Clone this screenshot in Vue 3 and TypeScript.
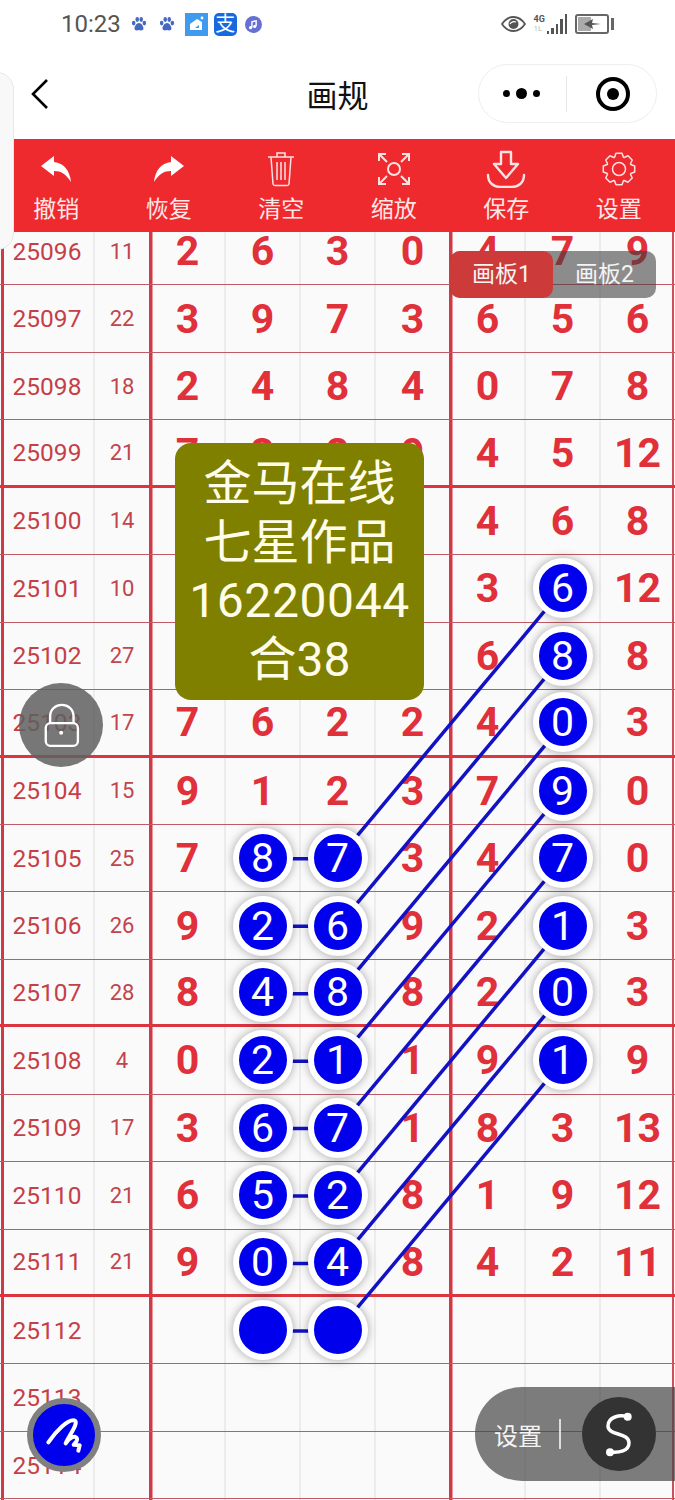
<script setup lang="ts">
const ROW_H = 67.45;
const TOP = 218;
const COL_LEFT = 263;
const COL_MID = 338;
const COL_RIGHT = 563;

// "(8)" is a picked number, "()" a picked blank, "-" an empty cell
const rawRows: [string, string, string][] = [
  ["25096", "11", "2 6 3 0 4 7 9"],
  ["25097", "22", "3 9 7 3 6 5 6"],
  ["25098", "18", "2 4 8 4 0 7 8"],
  ["25099", "21", "7 3 2 9 4 5 12"],
  ["25100", "14", "- - - - 4 6 8"],
  ["25101", "10", "- - - - 3 (6) 12"],
  ["25102", "27", "- - - - 6 (8) 8"],
  ["25103", "17", "7 6 2 2 4 (0) 3"],
  ["25104", "15", "9 1 2 3 7 (9) 0"],
  ["25105", "25", "7 (8) (7) 3 4 (7) 0"],
  ["25106", "26", "9 (2) (6) 9 2 (1) 3"],
  ["25107", "28", "8 (4) (8) 8 2 (0) 3"],
  ["25108", "4", "0 (2) (1) 1 9 (1) 9"],
  ["25109", "17", "3 (6) (7) 1 8 3 13"],
  ["25110", "21", "6 (5) (2) 8 1 9 12"],
  ["25111", "21", "9 (0) (4) 8 4 2 11"],
  ["25112", "", "- () () - - - -"],
  ["25113", "", "- - - - - - -"],
  ["25114", "", "- - - - - - -"],
];

const rows = rawRows.map(([id, sum, cells], i) => ({
  id,
  sum,
  thick: i % 4 === 3 && i < 16,
  cells: cells.split(" ").map((c) => ({
    ball: c.startsWith("("),
    text: c === "-" ? "" : c.replace(/[()]/g, ""),
  })),
}));

const rowY = (i: number) => TOP + ROW_H * (i + 0.5);

// each pick in the middle column joins up to one in the right column, four rows higher
const links = [9, 10, 11, 12, 13, 14, 15, 16].map((i) => ({
  y1: rowY(i),
  y2: rowY(i - 4),
  y: rowY(i),
}));

const tools = [
  { name: "撤销", icon: "undo" },
  { name: "恢复", icon: "redo" },
  { name: "清空", icon: "trash" },
  { name: "缩放", icon: "zoom" },
  { name: "保存", icon: "save" },
  { name: "设置", icon: "gear" },
];

function gearPath() {
  let d = "";
  for (let i = 0; i < 8; i++) {
    const a = (i * Math.PI) / 4;
    const pts: [number, number][] = [
      [12.6, a - 0.36],
      [16, a - 0.19],
      [16, a + 0.19],
      [12.6, a + 0.36],
    ];
    for (const [r, t] of pts) {
      const x = (17 + r * Math.cos(t)).toFixed(2);
      const y = (17 + r * Math.sin(t)).toFixed(2);
      d += (d ? "L" : "M") + x + " " + y;
    }
  }
  return d + "Z";
}
const gear = gearPath();
</script>

<template>
  <div class="page">
    <div class="status">
      <div class="status-left">
        <span class="time">10:23</span>
        <svg v-for="n in 2" :key="n" class="paw" viewBox="0 0 18 18">
          <ellipse cx="3" cy="8" rx="2" ry="2.6" />
          <ellipse cx="7" cy="4" rx="2" ry="2.8" />
          <ellipse cx="11.5" cy="4" rx="2" ry="2.8" />
          <ellipse cx="15" cy="8" rx="2" ry="2.6" />
          <path d="M9 8c-2.5 0-5 3.500-5 6 0 2.500 3 2.500 5 1.800 2 .7 5 .7 5-1.800 0-2.500-2.500-6-5-6z" />
        </svg>
        <svg class="house" viewBox="0 0 23 23">
          <rect width="23" height="23" fill="#3f9bf0" />
          <path d="M5 17v-6l7-5 5 3v8z" fill="#fff" />
          <circle cx="17" cy="5" r="1.400" fill="#fff" />
          <path d="M10 15l4-3v3z" fill="#3f9bf0" />
        </svg>
        <span class="alipay">支</span>
        <svg class="music" viewBox="0 0 16 16">
          <circle cx="8" cy="8" r="8" fill="#6670d2" />
          <path d="M6.500 11V5.500l4-1v5" fill="none" stroke="#fff" stroke-width="1.300" />
          <circle cx="5.200" cy="11" r="1.500" fill="#fff" />
          <circle cx="9.200" cy="9.800" r="1.500" fill="#fff" />
        </svg>
      </div>
      <div class="status-right">
        <svg class="eye" viewBox="0 0 25 16">
          <path d="M1 8c3-4.500 7-7 11.500-7S21 3.500 24 8c-3 4.500-7 7-11.500 7S4 12.500 1 8z" fill="none" stroke="#555" stroke-width="1.800" />
          <circle cx="12.500" cy="8" r="5" fill="#555" />
          <path d="M9 8c1-2 4-3 6-2" stroke="#fff" fill="none" stroke-width="1.200" />
        </svg>
        <div class="net">
          <span class="net-4g">4G</span>
          <span class="net-hd">1L</span>
        </div>
        <div class="bars">
          <i class="b1"></i><i class="b2"></i><i class="b3"></i><i class="b4"></i><i class="b5"></i>
        </div>
        <div class="battery">
          <svg class="flash" viewBox="0 0 28 14">
            <rect x="0" y="0" width="13" height="14" fill="#aaa" />
            <path d="M6 7l9-5-1 4 9 1-9 1 1 4z" fill="#555" />
          </svg>
        </div>
        <i class="battery-nub"></i>
      </div>
    </div>

    <div class="nav">
      <svg class="back" viewBox="0 0 18 32">
        <path d="M16 2L2 16l14 14" fill="none" stroke="#000" stroke-width="2.600" />
      </svg>
      <div class="title">画规</div>
      <div class="capsule">
        <div class="dots">
          <i class="dot"></i><i class="dot big"></i><i class="dot"></i>
        </div>
        <i class="capsule-line"></i>
        <div class="target"><i></i></div>
      </div>
    </div>

    <div class="toolbar">
      <div v-for="t in tools" :key="t.name" class="tool">
        <div class="tool-icon">
          <svg v-if="t.icon === 'undo'" width="32" height="28" viewBox="0 0 32 28">
            <path d="M1 11L14 1v6c10 1 16 9 17 20-5-8-10-11-17-11v5z" fill="#fff" />
          </svg>
          <svg v-else-if="t.icon === 'redo'" width="32" height="28" viewBox="0 0 32 28">
            <path d="M31 11L18 1v6C8 8 2 16 1 27c5-8 10-11 17-11v5z" fill="#fff" />
          </svg>
          <svg v-else-if="t.icon === 'trash'" width="30" height="36" viewBox="0 0 30 36" fill="none" stroke="#fbe3e3" stroke-width="1.500">
            <path d="M2 6h26M11 6V2h8v4M5 6l2 27q.2 1.500 2 1.500h12q1.800 0 2-1.500l2-27M11 11v18M15 11v18M19 11v18" />
          </svg>
          <svg v-else-if="t.icon === 'zoom'" width="34" height="34" viewBox="0 0 34 34" fill="none" stroke="#fbe3e3" stroke-width="2">
            <circle cx="17" cy="17" r="6" />
            <path d="M2 9V2h7M2 2l8 8M32 9V2h-7M32 2l-8 8M2 25v7h7M2 32l8-8M32 25v7h-7M32 32l-8-8" />
          </svg>
          <svg v-else-if="t.icon === 'save'" width="40" height="38" viewBox="0 0 40 38" fill="none" stroke="#fbe3e3" stroke-width="2.400">
            <path d="M15 2h10v12h7L20 28 8 14h7z" stroke-linejoin="round" />
            <path d="M2 25c0 8 6 12 12 12h12c6 0 12-4 12-12" stroke-linecap="round" />
          </svg>
          <svg v-else width="34" height="34" viewBox="0 0 34 34" fill="none" stroke="#fbe3e3" stroke-width="1.500" stroke-linejoin="round">
            <path :d="gear" />
            <circle cx="17" cy="17" r="6.500" />
          </svg>
        </div>
        <span class="tool-name">{{ t.name }}</span>
      </div>
    </div>

    <div class="board">
      <div class="grid">
        <div v-for="r in rows" :key="r.id" class="row" :class="{ thick: r.thick }">
          <div class="cell id">{{ r.id }}</div>
          <div class="cell sum">{{ r.sum }}</div>
          <div v-for="(c, i) in r.cells" :key="i" class="cell num">
            <span v-if="c.ball" class="ball">{{ c.text }}</span>
            <template v-else>{{ c.text }}</template>
          </div>
        </div>
      </div>
    </div>

    <svg class="links" width="675" height="1500">
      <g v-for="(l, i) in links" :key="i" stroke="#1212c4" stroke-width="3.500">
        <line :x1="COL_LEFT" :y1="l.y" :x2="COL_MID" :y2="l.y" />
        <line :x1="COL_MID" :y1="l.y1" :x2="COL_RIGHT" :y2="l.y2" />
      </g>
    </svg>

    <div class="sheet"></div>

    <div class="tabs">
      <div class="tab on">画板1</div>
      <div class="tab">画板2</div>
    </div>

    <div class="note">
      <div>金马在线</div>
      <div>七星作品</div>
      <div class="note-num">16220044</div>
      <div>合38</div>
    </div>

    <div class="lock">
      <svg width="84" height="84" viewBox="57 70 251 251" fill="none" stroke="#fff" stroke-width="7">
        <rect x="137" y="190" width="96" height="68" rx="14" />
        <path d="M150 190v-20c0-46 70-46 70 0v20" />
        <circle cx="183" cy="219" r="6" fill="#fff" stroke="none" />
      </svg>
    </div>

    <div class="pen">
      <svg width="62" height="62" viewBox="100 370 186 186" fill="none" stroke="#fff" stroke-width="12" stroke-linecap="round" stroke-linejoin="round">
        <path d="M146 485C170 450 205 415 224 419C240 424 208 465 198 488C210 470 228 462 232 474C234 482 222 490 222 492L240 494L236 510" />
      </svg>
    </div>

    <div class="pill">
      <span class="pill-text">设置</span>
      <i class="pill-line"></i>
      <div class="pill-btn">
        <svg width="74" height="74" viewBox="0 0 74 74" fill="none" stroke="#fff" stroke-width="3.500">
          <path d="M46 20C38 17 26 20 26 29c0 10 21 6 21 17 0 8-10 10-19 9" />
          <circle cx="45.700" cy="19.700" r="4" fill="#fff" stroke="none" />
          <circle cx="28" cy="55.300" r="4" fill="#fff" stroke="none" />
        </svg>
      </div>
    </div>
  </div>
</template>

<style scoped>
.page {
  position: relative;
  width: 675px;
  height: 1500px;
  overflow: hidden;
  background: #fff;
  font-family: Roboto, "Noto Sans CJK SC", sans-serif;
}

.status {
  height: 48px;
  display: flex;
  align-items: center;
  justify-content: space-between;
  padding: 0 61px;
  box-sizing: border-box;
}
.status-left,
.status-right {
  display: flex;
  align-items: center;
}
.time {
  font-size: 24px;
  color: #555;
  margin-right: 10px;
}
.paw {
  width: 16px;
  height: 16px;
  fill: #4468c4;
  margin-right: 12px;
}
.house {
  width: 23px;
  height: 23px;
  margin-left: -2px;
  margin-right: 6px;
}
.alipay {
  width: 23px;
  height: 23px;
  line-height: 22px;
  text-align: center;
  background: #1769e0;
  border-radius: 5px;
  color: #fff;
  font-size: 20px;
  margin-right: 8px;
}
.music {
  width: 17px;
  height: 17px;
}
.eye {
  width: 25px;
  height: 16px;
  margin-right: 8px;
}
.net {
  display: flex;
  flex-direction: column;
  width: 13px;
  line-height: 9px;
  font-size: 9px;
  font-weight: 700;
  color: #555;
}
.net-hd {
  color: #bbb;
  font-size: 8px;
  font-weight: 400;
}
.bars {
  display: flex;
  align-items: flex-end;
  gap: 2px;
  height: 20px;
  margin-right: 8px;
}
.bars i {
  width: 2.500px;
  background: #555;
}
.b1 { height: 3px; }
.b2 { height: 6px; }
.b3 { height: 10px; }
.b4 { height: 15px; }
.b5 { height: 20px; }
.battery {
  width: 34px;
  height: 20px;
  box-sizing: border-box;
  border: 2px solid #666;
  border-radius: 3px;
  padding: 1px;
  display: flex;
}
.flash {
  width: 28px;
  height: 14px;
}
.battery-nub {
  width: 3px;
  height: 12px;
  margin-left: 2px;
  background: #666;
}

.nav {
  height: 91px;
  display: grid;
  grid-template-columns: 1fr auto 1fr;
  align-items: center;
  padding: 0 18px;
}
.back {
  width: 18px;
  height: 32px;
  margin-left: 13px;
}
.title {
  font-size: 31px;
  color: #111;
}
.capsule {
  justify-self: end;
  width: 179px;
  height: 59px;
  box-sizing: border-box;
  border: 1px solid #eee;
  border-radius: 30px;
  display: flex;
  align-items: center;
  padding-left: 24px;
}
.dots {
  display: flex;
  align-items: center;
  gap: 6px;
}
.dot {
  width: 7px;
  height: 7px;
  border-radius: 50%;
  background: #000;
}
.dot.big {
  width: 11px;
  height: 11px;
}
.capsule-line {
  width: 1px;
  height: 36px;
  background: #e6e6e6;
  margin-left: 26px;
}
.target {
  width: 34px;
  height: 34px;
  box-sizing: border-box;
  border: 4px solid #000;
  border-radius: 50%;
  margin-left: 29px;
  display: flex;
  align-items: center;
  justify-content: center;
}
.target i {
  width: 12px;
  height: 12px;
  border-radius: 50%;
  background: #000;
}

.toolbar {
  position: relative;
  z-index: 3;
  height: 93px;
  background: #ee2a2f;
  display: grid;
  grid-template-columns: repeat(6, 1fr);
}
.tool {
  display: flex;
  flex-direction: column;
  align-items: center;
}
.tool-icon {
  height: 46px;
  margin-top: 7px;
  display: flex;
  align-items: center;
  justify-content: center;
}
.tool-name {
  font-size: 23px;
  line-height: 30px;
  margin-top: 3px;
  color: #fde8e8;
}

.board {
  height: 1268px;
  overflow: hidden;
  background:
    linear-gradient(#d03a44, #d03a44) 1px 0 / 3px 100% no-repeat,
    linear-gradient(#d03a44, #d03a44) 148.500px 0 / 3.500px 100% no-repeat,
    linear-gradient(#d03a44, #d03a44) 448.500px 0 / 3.500px 100% no-repeat,
    linear-gradient(#d05058, #d05058) 672px 0 / 2px 100% no-repeat,
    linear-gradient(#ececec, #ececec) 93px 0 / 2px 100% no-repeat,
    linear-gradient(#ececec, #ececec) 224px 0 / 2px 100% no-repeat,
    linear-gradient(#ececec, #ececec) 299px 0 / 2px 100% no-repeat,
    linear-gradient(#ececec, #ececec) 374px 0 / 2px 100% no-repeat,
    linear-gradient(#ececec, #ececec) 524px 0 / 2px 100% no-repeat,
    linear-gradient(#ececec, #ececec) 599px 0 / 2px 100% no-repeat,
    #fbfafb;
}
.grid {
  margin-top: -14px;
}
.row {
  display: grid;
  grid-template-columns: 94px 56px repeat(7, 75px);
  height: 67.450px;
  box-sizing: border-box;
  border-bottom: 1px solid #c05a66;
}
.row.thick {
  border-bottom: 3px solid #dd3540;
}
.cell {
  display: flex;
  align-items: center;
  justify-content: center;
}
.id {
  font-size: 24.500px;
  color: #c53f47;
}
.sum {
  font-size: 22px;
  color: #c0454c;
}
.num {
  font-size: 41px;
  font-weight: 700;
  color: #e0303a;
}
.ball {
  position: relative;
  z-index: 2;
  width: 60px;
  height: 60px;
  flex: none;
  box-sizing: border-box;
  border: 6px solid #fff;
  border-radius: 50%;
  background: #0000ec;
  box-shadow: 0 0 10px rgba(0, 0, 0, 0.35);
  display: flex;
  align-items: center;
  justify-content: center;
  color: #fff;
  font-size: 41px;
  font-weight: 400;
}

.links {
  position: absolute;
  left: 0;
  top: 0;
  z-index: 1;
  pointer-events: none;
}

.sheet {
  position: absolute;
  left: -20px;
  top: 72px;
  z-index: 4;
  width: 34px;
  height: 178px;
  box-sizing: border-box;
  background: #f8f8f8;
  border: 1px solid #e8e8e8;
  border-radius: 18px;
}

.tabs {
  position: absolute;
  left: 450px;
  top: 251px;
  z-index: 3;
  display: flex;
  width: 206px;
  height: 47px;
  background: rgba(60, 60, 60, 0.58);
  border-radius: 10px;
}
.tab {
  flex: 1;
  border-radius: 10px;
  color: #f4f4f4;
  font-size: 23px;
  line-height: 48px;
  text-align: center;
}
.tab.on {
  background: #cc3a3a;
}

.note {
  position: absolute;
  left: 175px;
  top: 443px;
  z-index: 3;
  width: 249px;
  height: 257px;
  box-sizing: border-box;
  padding-top: 12px;
  border-radius: 16px;
  background: #808000;
  color: #fffde8;
  font-size: 48px;
  line-height: 58.700px;
  text-align: center;
}
.note-num {
  letter-spacing: 0.600px;
}

.lock {
  position: absolute;
  left: 19px;
  top: 683px;
  z-index: 3;
  width: 84px;
  height: 84px;
  border-radius: 50%;
  background: rgba(95, 95, 95, 0.85);
}

.pen {
  position: absolute;
  left: 27px;
  top: 1398px;
  z-index: 3;
  width: 62px;
  height: 62px;
  border: 6px solid #808080;
  border-radius: 50%;
  background: #0000ec;
}

.pill {
  position: absolute;
  left: 475px;
  top: 1387px;
  z-index: 3;
  width: 200px;
  height: 94px;
  border-radius: 47px 0 0 47px;
  background: rgba(70, 70, 70, 0.7);
  display: flex;
  align-items: center;
  padding-left: 19px;
  box-sizing: border-box;
}
.pill-text {
  font-size: 24px;
  color: #f4f4f4;
}
.pill-line {
  width: 2px;
  height: 30px;
  margin-left: 17px;
  background: #ddd;
}
.pill-btn {
  width: 74px;
  height: 74px;
  margin-left: 21px;
  border-radius: 50%;
  background: #333;
}
</style>
